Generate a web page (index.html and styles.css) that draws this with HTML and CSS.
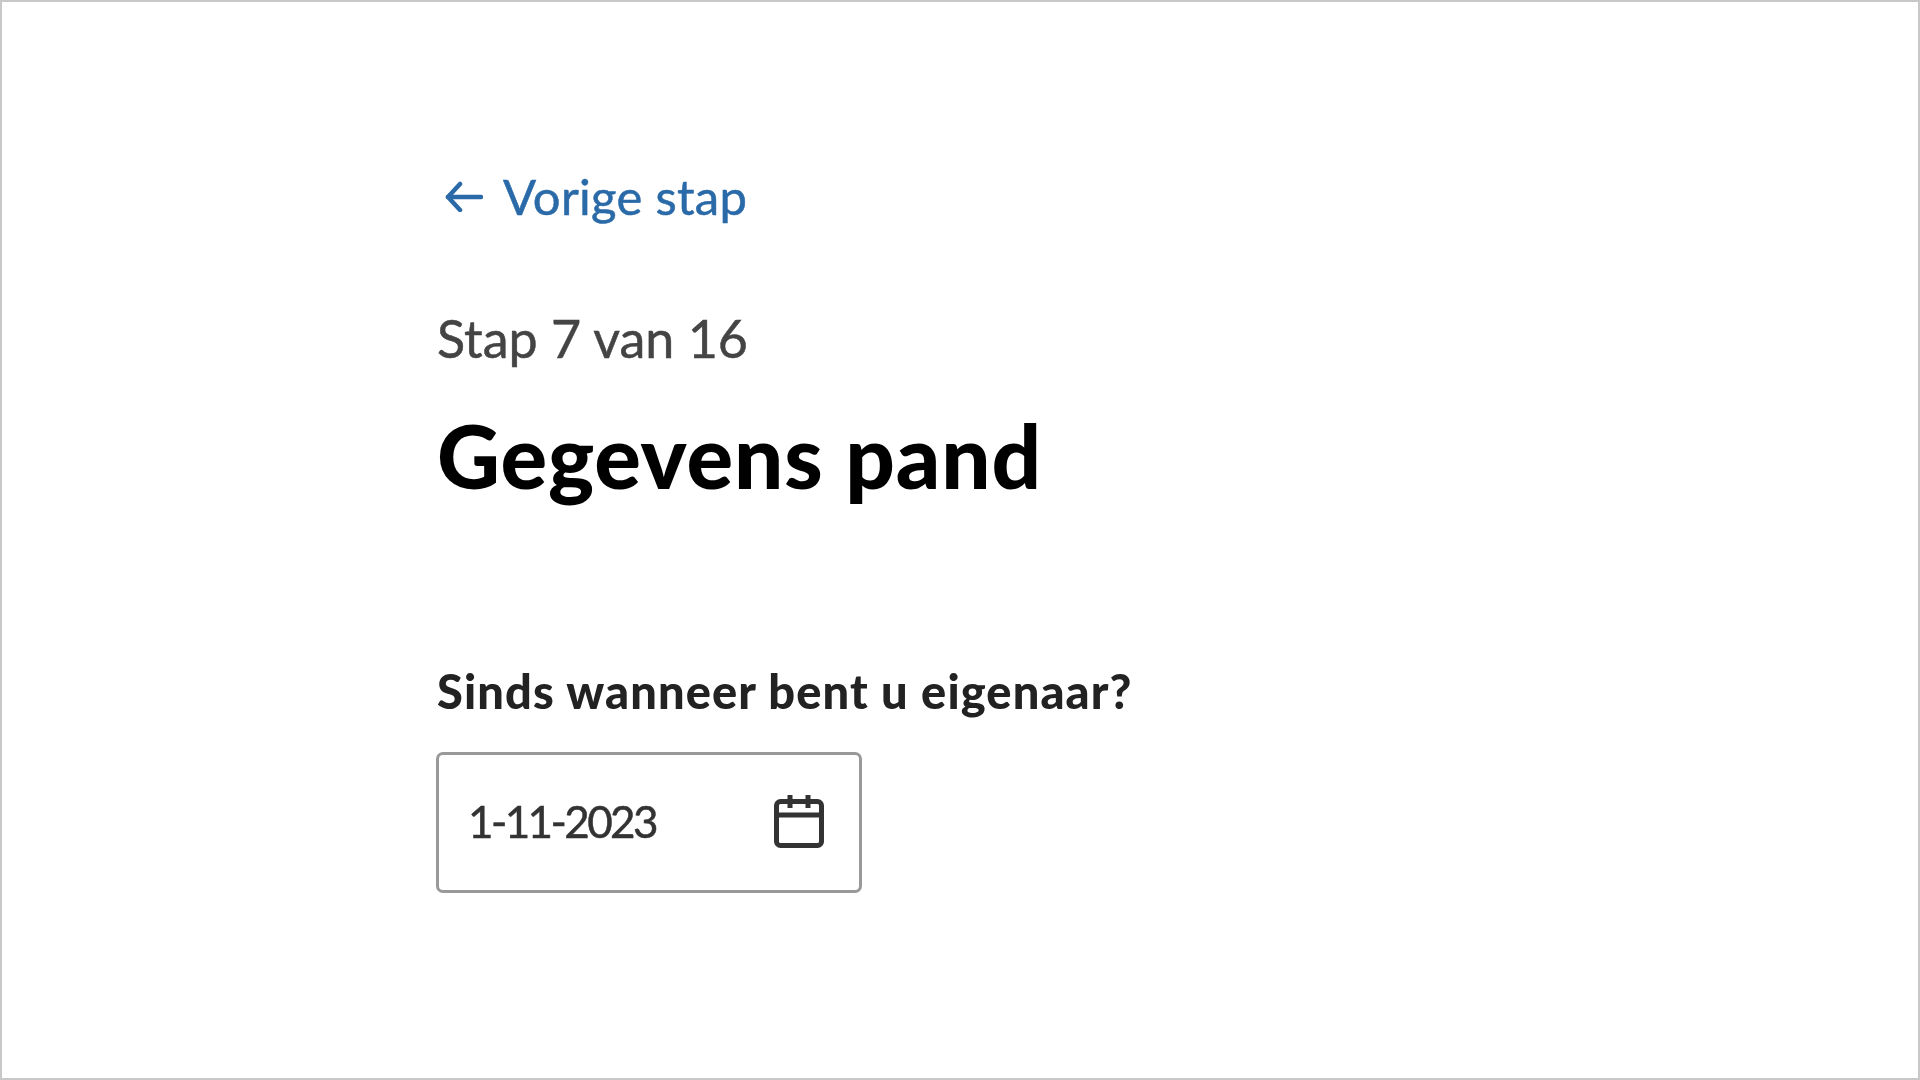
FILE: index.html
```html
<!DOCTYPE html>
<html lang="nl">
<head>
    <meta charset="UTF-8">
    <title>Gegevens pand</title>
    <link rel="stylesheet" href="styles.css">
</head>
<body>
    <main class="page">
        <div class="content">
            <a class="back-link" href="#">
                <svg class="back-icon" viewBox="0 0 38 32" fill="none" stroke="currentColor" stroke-width="4.5" stroke-linecap="round" stroke-linejoin="round">
                    <path d="M36 17H3"/>
                    <path d="M15 4L3 17l12 13"/>
                </svg>
                <span>Vorige stap</span>
            </a>
            <p class="step">Stap 7 van 16</p>
            <h1 class="title">Gegevens pand</h1>
            <label class="field-label">Sinds wanneer bent u eigenaar?</label>
            <div class="date-input">
                <span class="date-value">1-11-2023</span>
                <svg class="date-icon" viewBox="0 0 50 54" fill="none" stroke="#333" stroke-width="5">
                    <rect x="2.5" y="7.5" width="45" height="44" rx="4"/>
                    <path d="M2.5 21h45"/>
                    <path d="M16 1v13M34 1v13"/>
                </svg>
            </div>
        </div>
    </main>
</body>
</html>
```

FILE: styles.css
```css
html, body {
    margin: 0;
    height: 100%;
}
body {
    font-family: Lato, sans-serif;
    background-color: white;
}
.page {
    box-sizing: border-box;
    height: 1080px;
    padding: 166px 0 0 434px;
    border: 2px solid #c8c8c8;
}
/* source is an upscaled screenshot, text is a bit soft */
.content {
    display: flex;
    flex-direction: column;
    align-items: flex-start;
    filter: blur(0.6px);
}
.back-link {
    display: flex;
    align-items: center;
    gap: 20px;
    margin-left: 9px;
    height: 56px;
    font-size: 49px;
    letter-spacing: 0.3px;
    -webkit-text-stroke: 0.5px;
    color: #2a6aa8;
    text-decoration: none;
}
.back-icon {
    width: 38px;
    height: 32px;
}
.step {
    margin: 84px 0 0 1px;
    font-size: 52px;
    line-height: 60px;
    -webkit-text-stroke: 0.5px;
    color: #444;
}
.title {
    margin: 38px 0 0 1px;
    font-size: 87px;
    line-height: 100px;
    font-weight: 900;
    letter-spacing: 0.9px;
    color: #000;
}
.field-label {
    margin: 157px 0 0 1px;
    font-size: 47px;
    line-height: 56px;
    font-weight: 900;
    letter-spacing: 1.1px;
    color: #222;
}
.date-input {
    box-sizing: border-box;
    width: 426px;
    height: 141px;
    margin-top: 33px;
    padding: 0 35px 4px 29px;
    border: 3px solid #999;
    border-radius: 7px;
    display: flex;
    align-items: center;
    justify-content: space-between;
}
.date-value {
    font-size: 44px;
    letter-spacing: -2.6px;
    -webkit-text-stroke: 0.5px;
    color: #333;
}
.date-icon {
    width: 50px;
    height: 54px;
}
```
